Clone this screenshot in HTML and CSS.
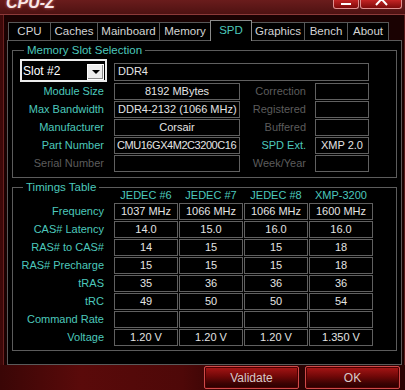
FILE: index.html
```html
<!DOCTYPE html>
<html>
<head>
<meta charset="utf-8">
<link rel="stylesheet" href="styles.css">
</head>
<body>
<div class="window">
  <div class="titlebar">
    <span class="title">CPU-Z</span>
    <div class="controls">
      <div class="ctl min"><span class="min-bar"></span></div>
      <div class="ctl close"><svg width="40" height="8" viewBox="0 0 40 8"><polyline points="15,5 20.5,-1 26,5" fill="none" stroke="#fff" stroke-width="2"/></svg></div>
    </div>
  </div>
  <div class="client">
    <div class="tabs">
      <div class="tab t-cpu">CPU</div>
      <div class="tab t-caches">Caches</div>
      <div class="tab t-main">Mainboard</div>
      <div class="tab t-mem">Memory</div>
      <div class="tab t-spd active">SPD</div>
      <div class="tab t-gfx">Graphics</div>
      <div class="tab t-bench">Bench</div>
      <div class="tab t-about">About</div>
    </div>
    <div class="panel">
      <div class="group">
        <span class="group-title">Memory Slot Selection</span>
        <div class="slot-grid">
          <div class="slot"><span class="slot-text">Slot #2</span><span class="slot-btn"><span class="tri"></span></span></div>
          <div class="box ddr">DDR4</div>

          <div class="lbl">Module Size</div>
          <div class="box c">8192 MBytes</div>
          <div class="lbl r dim">Correction</div>
          <div class="box"></div>

          <div class="lbl">Max Bandwidth</div>
          <div class="box">DDR4-2132 (1066 MHz)</div>
          <div class="lbl r dim">Registered</div>
          <div class="box"></div>

          <div class="lbl">Manufacturer</div>
          <div class="box c">Corsair</div>
          <div class="lbl r dim">Buffered</div>
          <div class="box"></div>

          <div class="lbl">Part Number</div>
          <div class="box part">CMU16GX4M2C3200C16</div>
          <div class="lbl r">SPD Ext.</div>
          <div class="box c">XMP 2.0</div>

          <div class="lbl dim">Serial Number</div>
          <div class="box"></div>
          <div class="lbl r dim">Week/Year</div>
          <div class="box"></div>
        </div>
      </div>

      <div class="group timings-group">
        <span class="group-title">Timings Table</span>
        <div class="timings">
          <div></div>
          <div class="hd">JEDEC #6</div>
          <div class="hd">JEDEC #7</div>
          <div class="hd">JEDEC #8</div>
          <div class="hd">XMP-3200</div>

          <div class="lbl">Frequency</div>
          <div class="box c">1037 MHz</div>
          <div class="box c">1066 MHz</div>
          <div class="box c">1066 MHz</div>
          <div class="box c">1600 MHz</div>

          <div class="lbl">CAS# Latency</div>
          <div class="box c">14.0</div>
          <div class="box c">15.0</div>
          <div class="box c">16.0</div>
          <div class="box c">16.0</div>

          <div class="lbl">RAS# to CAS#</div>
          <div class="box c">14</div>
          <div class="box c">15</div>
          <div class="box c">15</div>
          <div class="box c">18</div>

          <div class="lbl">RAS# Precharge</div>
          <div class="box c">15</div>
          <div class="box c">15</div>
          <div class="box c">15</div>
          <div class="box c">18</div>

          <div class="lbl">tRAS</div>
          <div class="box c">35</div>
          <div class="box c">36</div>
          <div class="box c">36</div>
          <div class="box c">36</div>

          <div class="lbl">tRC</div>
          <div class="box c">49</div>
          <div class="box c">50</div>
          <div class="box c">50</div>
          <div class="box c">54</div>

          <div class="lbl">Command Rate</div>
          <div class="box c"></div>
          <div class="box c"></div>
          <div class="box c"></div>
          <div class="box c"></div>

          <div class="lbl">Voltage</div>
          <div class="box c">1.20 V</div>
          <div class="box c">1.20 V</div>
          <div class="box c">1.20 V</div>
          <div class="box c">1.350 V</div>
        </div>
      </div>
    </div>
  </div>
  <div class="footer">
    <div class="btn">Validate</div>
    <div class="btn">OK</div>
  </div>
</div>
</body>
</html>
```
FILE: styles.css
```css
* { box-sizing: border-box; }
html, body { margin: 0; padding: 0; }
body {
  width: 405px;
  height: 390px;
  overflow: hidden;
  background: #240404;
  font-family: "Liberation Sans", Arial, sans-serif;
  font-size: 11px;
  color: #e2e2e2;
}
.window {
  width: 405px;
  height: 390px;
  display: flex;
  flex-direction: column;
  background: linear-gradient(to right, #3e0909 0, #300606 40%, #2a0505 100%);
}
.titlebar {
  height: 15px;
  flex: none;
  display: flex;
  justify-content: space-between;
  align-items: flex-start;
  background: linear-gradient(#6a1c1c, #4e1212);
  border-bottom: 1px solid #8c3a3a;
}
.title {
  margin: -5px 0 0 6px;
  font-size: 16px;
  line-height: 16px;
  font-weight: bold;
  font-style: italic;
  color: #f8e8e8;
  text-shadow: 0 0 3px #d07070;
}
.controls {
  display: flex;
  gap: 1px;
  margin-right: 3px;
}
.ctl {
  height: 9px;
  border: 1px solid #e09090;
  border-top: none;
  border-radius: 0 0 3px 3px;
  background: linear-gradient(#c42424, #7c0a0a);
}
.min {
  width: 26px;
  display: flex;
  justify-content: center;
  padding-top: 3px;
}
.min-bar {
  width: 10px;
  height: 2px;
  background: #fff;
}
.close { width: 42px; }
.close svg { display: block; }

.client {
  flex: none;
  height: 350px;
  margin-left: 3px;
  width: 402px;
  border-left: 1px solid #6a2020;
  border-right: 1px solid #5a1818;
  background: #1a0202;
}
.tabs {
  display: flex;
  align-items: flex-end;
  height: 20px;
  margin: 5px 0 0 4px;
}
.tab {
  height: 18px;
  border: 1px solid #585858;
  border-bottom: none;
  margin-right: -1px;
  background: #000;
  color: #d4d4d4;
  text-align: center;
  line-height: 17px;
  font-size: 11.5px;
  white-space: nowrap;
}
.tab.active {
  height: 21px;
  margin-bottom: -1px;
  position: relative;
  z-index: 1;
  color: #4cc8bc;
  border-color: #8a8a8a;
  line-height: 19px;
}
.t-cpu { width: 43px; }
.t-caches { width: 48px; }
.t-main { width: 63px; }
.t-mem { width: 52px; }
.t-spd { width: 42px; }
.t-gfx { width: 54px; }
.t-bench { width: 44px; }
.t-about { width: 42px; }

.panel {
  margin-left: 3px;
  width: 395px;
  height: 325px;
  border: 1px solid #5a5a5a;
  background: #000;
  padding: 9px 4px 0 4px;
}
.group {
  border: 1px solid #5c5c5c;
}
.group-title {
  display: block;
  width: max-content;
  height: 13px;
  margin: -7px 0 -6px 11px;
  padding: 0 3px;
  line-height: 13px;
  background: #000;
  color: #4cc8bc;
  font-size: 11.5px;
}
.timings-group { margin-top: 9px; }
.timings-group .group-title { margin-left: 10px; }

.slot-grid {
  display: grid;
  grid-template-columns: 101px 126px 75px 54px;
  grid-template-rows: 23px repeat(5, 17px);
  row-gap: 1px;
  padding: 8px 0 5px;
}
.slot {
  margin-left: 7px;
  width: 87px;
  height: 23px;
  border: 2px solid #ececec;
  background: #000;
  display: flex;
  justify-content: space-between;
  align-items: center;
  padding: 0 1px 0 1px;
}
.slot-text {
  color: #fff;
  font-size: 12px;
  padding-top: 1px;
}
.slot-btn {
  width: 17px;
  height: 16px;
  background: #ededed;
  border: 1px solid #fff;
  box-shadow: inset -1px -1px 0 #8a8a8a;
  display: flex;
  justify-content: center;
  align-items: center;
  margin-top: 2px;
}
.tri {
  width: 0;
  height: 0;
  border-left: 4px solid transparent;
  border-right: 4px solid transparent;
  border-top: 4px solid #000;
}
.ddr {
  grid-column: 2 / 5;
  align-self: end;
  height: 18px;
  margin-bottom: 1px;
  line-height: 16px;
}
.lbl {
  text-align: right;
  padding-right: 10px;
  line-height: 17px;
  color: #4cc8bc;
  white-space: nowrap;
}
.lbl.r { padding-right: 9px; }
.lbl.dim { color: #5c5c5c; }
.box {
  border: 1px solid #606060;
  line-height: 15px;
  padding: 0 3px;
  white-space: nowrap;
  overflow: hidden;
  color: #e4e4e4;
}
.box.part {
  padding: 0 0 0 2px;
  letter-spacing: -0.45px;
}
.c { text-align: center; }

.timings {
  display: grid;
  grid-template-columns: 100px repeat(4, 64px);
  column-gap: 1px;
  grid-template-rows: 14px repeat(8, 17px);
  row-gap: 1px;
  padding: 0 0 4px;
}
.timings .lbl { padding-right: 9px; }
.hd {
  text-align: center;
  color: #4cc8bc;
  line-height: 14px;
  white-space: nowrap;
}

.footer {
  flex: 1;
  display: flex;
  justify-content: flex-end;
  align-items: flex-start;
  gap: 6px;
  padding: 1px 5px 0 0;
  background: linear-gradient(to right, #3a0606 0, #5a0a0a 20%, #4e0808 45%, #2a0303 60%, #2a0303 100%);
}
.btn {
  width: 95px;
  height: 23px;
  border: 1px solid #d04a4a;
  border-radius: 2px;
  background: linear-gradient(#a81616, #700808 45%, #3a0202 80%, #2a0000);
  box-shadow: inset 0 0 0 1px #4a0000;
  color: #d6caca;
  display: flex;
  align-items: center;
  justify-content: center;
  font-size: 12px;
}
```
